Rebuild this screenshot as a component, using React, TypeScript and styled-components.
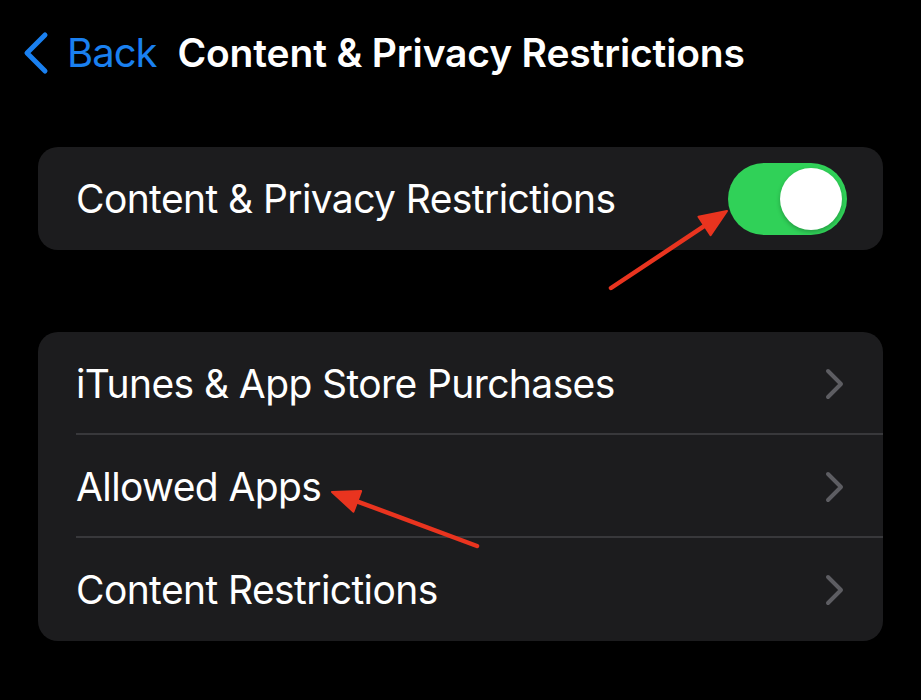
import React from "react";
import styled, { createGlobalStyle } from "styled-components";

const Global = createGlobalStyle`
  html, body { margin: 0; padding: 0; background: #000; }
  body { font-family: Inter, "Noto Sans", "Liberation Sans", sans-serif; -webkit-font-smoothing: antialiased; }
`;

const Page = styled.div`
  position: relative;
  width: 921px;
  height: 700px;
  background: #000;
  overflow: hidden;
`;

const NavBar = styled.div`
  height: 105px;
  display: flex;
  align-items: center;
  padding-left: 22px;
  box-sizing: border-box;
`;

const BackButton = styled.div`
  display: flex;
  align-items: center;
  gap: 17px;
  color: #1a80f0;
  font-size: 40px;
  letter-spacing: -1px;
  margin-right: 21px;
`;

const Title = styled.div`
  color: #fff;
  font-size: 39px;
  font-weight: 600;
  letter-spacing: -0.15px;
`;

const Content = styled.div`
  padding: 42px 38px 0;
  display: flex;
  flex-direction: column;
  gap: 82px;
`;

const Card = styled.div`
  background: #1c1c1e;
  border-radius: 20px;
  overflow: hidden;
`;

const Row = styled.div<{ $divider?: boolean }>`
  position: relative;
  height: 103px;
  display: flex;
  align-items: center;
  justify-content: space-between;
  padding: 0 37px 0 38px;
  color: #fff;
  font-size: 39px;
  letter-spacing: -0.6px;
  &::after {
    content: "";
    display: ${(p) => (p.$divider ? "block" : "none")};
    position: absolute;
    left: 38px;
    right: 0;
    bottom: 0;
    height: 2px;
    background: #38383b;
  }
`;

const Switch = styled.div`
  width: 119px;
  height: 72px;
  border-radius: 36px;
  background: #30d158;
  display: flex;
  align-items: center;
  justify-content: flex-end;
  padding: 0 5px;
  box-sizing: border-box;
  margin-right: -1px;
`;

const Knob = styled.div`
  width: 62px;
  height: 62px;
  border-radius: 50%;
  background: #fff;
  box-shadow: 0 2px 4px rgba(0, 0, 0, 0.25);
`;

const Chevron = () => (
  <svg width="22" height="32" viewBox="0 0 22 32">
    <polyline
      points="4,3 17,16 4,29"
      fill="none"
      stroke="#5d5d62"
      strokeWidth="4"
      strokeLinecap="round"
      strokeLinejoin="round"
    />
  </svg>
);

const Overlay = styled.svg`
  position: absolute;
  inset: 0;
  pointer-events: none;
`;

function Arrow({ x1, y1, x2, y2 }: { x1: number; y1: number; x2: number; y2: number }) {
  const dx = x2 - x1;
  const dy = y2 - y1;
  const len = Math.hypot(dx, dy);
  const ux = dx / len;
  const uy = dy / len;
  const hl = 27;
  const hw = 11;
  const bx = x2 - ux * hl;
  const by = y2 - uy * hl;
  const px = -uy;
  const py = ux;
  return (
    <g>
      <line x1={x1} y1={y1} x2={bx + ux * 4} y2={by + uy * 4} stroke="#e9341f" strokeWidth="4.5" strokeLinecap="round" />
      <polygon
        points={`${x2},${y2} ${bx + px * hw},${by + py * hw} ${bx - px * hw},${by - py * hw}`}
        fill="#e9341f"
        stroke="#e9341f"
        strokeWidth="2"
        strokeLinejoin="round"
      />
    </g>
  );
}

export default function App() {
  return (
    <Page>
      <Global />
      <NavBar>
        <BackButton>
          <svg width="28" height="44" viewBox="0 0 28 44">
            <polyline
              points="23,4 5,22 23,40"
              fill="none"
              stroke="#1a80f0"
              strokeWidth="5"
              strokeLinecap="round"
              strokeLinejoin="round"
            />
          </svg>
          <span>Back</span>
        </BackButton>
        <Title>Content &amp; Privacy Restrictions</Title>
      </NavBar>
      <Content>
        <Card>
          <Row>
            <span>Content &amp; Privacy Restrictions</span>
            <Switch>
              <Knob />
            </Switch>
          </Row>
        </Card>
        <Card>
          <Row $divider>
            <span>iTunes &amp; App Store Purchases</span>
            <Chevron />
          </Row>
          <Row $divider>
            <span>Allowed Apps</span>
            <Chevron />
          </Row>
          <Row>
            <span>Content Restrictions</span>
            <Chevron />
          </Row>
        </Card>
      </Content>
      <Overlay width="921" height="700" viewBox="0 0 921 700">
        <Arrow x1={611} y1={288} x2={727} y2={211} />
        <Arrow x1={477} y1={546} x2={332} y2={492} />
      </Overlay>
    </Page>
  );
}
